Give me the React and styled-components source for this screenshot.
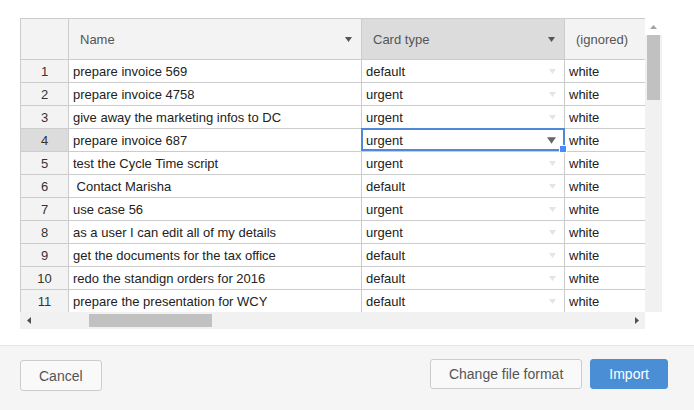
import React from 'react';
import styled, { createGlobalStyle } from 'styled-components';

const GlobalStyle = createGlobalStyle`
  html, body {
    margin: 0;
    padding: 0;
    background: #fff;
    font-family: "Liberation Sans", Arial, sans-serif;
  }
`;

const rows = [
  ['prepare invoice 569', 'default'],
  ['prepare invoice 4758', 'urgent'],
  ['give away the marketing infos to DC', 'urgent'],
  ['prepare invoice 687', 'urgent'],
  ['test the Cycle Time script', 'urgent'],
  [' Contact Marisha', 'default'],
  ['use case 56', 'urgent'],
  ['as a user I can edit all of my details', 'urgent'],
  ['get the documents for the tax office', 'default'],
  ['redo the standign orders for 2016', 'default'],
  ['prepare the presentation for WCY', 'default'],
];

const SELECTED_ROW = 3;

const Page = styled.div`
  width: 694px;
  height: 410px;
  display: flex;
  flex-direction: column;
  overflow: hidden;
`;

const TableArea = styled.div`
  padding: 18px 0 0 20px;
  display: grid;
  grid-template-columns: 625px 17px;
  grid-template-rows: 294px 17px;
`;

const Viewport = styled.div`
  overflow: hidden;
  position: relative;
`;

const Grid = styled.div`
  display: grid;
  grid-template-columns: 48px 293px 203px 120px;
  grid-auto-rows: 23px;
  grid-template-rows: 41px;
  border-top: 1px solid #ccc;
  border-left: 1px solid #ccc;
  width: max-content;
  font-size: 13px;
`;

const HeaderCell = styled.div`
  box-sizing: border-box;
  border-right: 1px solid #ccc;
  border-bottom: 1px solid #ccc;
  background: ${p => (p.active ? '#dcdcdc' : '#f3f3f3')};
  color: #555;
  display: flex;
  align-items: center;
  justify-content: space-between;
  padding: 0 9px 0 11px;
  white-space: nowrap;
`;

const RowHead = styled.div`
  box-sizing: border-box;
  border-right: 1px solid #ccc;
  border-bottom: 1px solid #ccc;
  background: ${p => (p.active ? '#dcdcdc' : '#f3f3f3')};
  color: #333;
  display: flex;
  align-items: center;
  justify-content: center;
`;

const Cell = styled.div`
  box-sizing: border-box;
  border-right: 1px solid #ccc;
  border-bottom: 1px solid #ccc;
  background: #fff;
  color: #222;
  display: flex;
  align-items: center;
  justify-content: space-between;
  padding: 0 8px 0 4px;
  white-space: pre;
  overflow: ${p => (p.selected ? 'visible' : 'hidden')};
  position: relative;
`;

const SelectBox = styled.div`
  position: absolute;
  left: -1px;
  top: -1px;
  right: -1px;
  bottom: 0;
  border: 2px solid #5088d8;
  pointer-events: none;
`;

const Handle = styled.span`
  position: absolute;
  right: -4px;
  bottom: -4px;
  width: 6px;
  height: 6px;
  background: #4b89ff;
  border: 1px solid #fff;
  z-index: 2;
`;

const CellWrap = styled.div`
  display: contents;
`;

const Arrow = ({ color = '#555', w = 7, h = 5 }) => (
  <svg width={w} height={h} viewBox="0 0 7 5">
    <polygon points="0,0 7,0 3.5,5" fill={color} />
  </svg>
);

const VScroll = styled.div`
  display: flex;
  flex-direction: column;
  background: #f1f1f1;
`;

const ScrollButton = styled.div`
  width: 17px;
  height: 17px;
  flex-shrink: 0;
  display: flex;
  align-items: center;
  justify-content: center;
  background: ${p => (p.light ? '#fff' : '#f1f1f1')};
`;

const VThumb = styled.div`
  margin: 0 2px;
  height: 65px;
  background: #c1c1c1;
`;

const HScroll = styled.div`
  display: flex;
  align-items: center;
  background: #f1f1f1;
`;

const HThumb = styled.div`
  margin-left: ${p => p.offset}px;
  width: 123px;
  height: 13px;
  background: #c1c1c1;
`;

const Spacer = styled.div`
  flex: 1;
`;

const Corner = styled.div`
  background: #fff;
`;

const Footer = styled.div`
  margin-top: 16px;
  flex: 1;
  border-top: 1px solid #e5e5e5;
  background: #f5f5f5;
  display: flex;
  align-items: flex-start;
  padding: 13px 26px 0 20px;
  gap: 8px;
`;

const Button = styled.button`
  font-family: "Liberation Sans", Arial, sans-serif;
  font-size: 14px;
  height: ${p => (p.tall ? 31 : 30)}px;
  margin-top: ${p => (p.tall ? 1 : 0)}px;
  padding: 0 18px;
  border-radius: 3px;
  border: 1px solid ${p => (p.primary ? '#4a8ed6' : '#ccc')};
  background: ${p => (p.primary ? '#4a8ed6' : '#f9f9f9')};
  color: ${p => (p.primary ? '#fff' : '#555')};
  cursor: pointer;
  margin-left: ${p => (p.push ? 'auto' : '0')};
`;

const App = () => (
  <Page>
    <GlobalStyle />
    <TableArea>
      <Viewport>
        <Grid>
          <HeaderCell />
          <HeaderCell>
            <span>Name</span>
            <Arrow />
          </HeaderCell>
          <HeaderCell active>
            <span>Card type</span>
            <Arrow />
          </HeaderCell>
          <HeaderCell>
            <span>(ignored)</span>
          </HeaderCell>
          {rows.map(([name, type], i) => {
            const selected = i === SELECTED_ROW;
            return (
              <CellWrap key={i}>
                <RowHead active={selected}>{i + 1}</RowHead>
                <Cell>{name}</Cell>
                <Cell selected={selected}>
                  <span>{type}</span>
                  {selected ? <Arrow color="#666" w={9} h={7} /> : <Arrow color="#e4e4e4" />}
                  {selected && (
                    <SelectBox>
                      <Handle />
                    </SelectBox>
                  )}
                </Cell>
                <Cell>white</Cell>
              </CellWrap>
            );
          })}
        </Grid>
      </Viewport>
      <VScroll>
        <ScrollButton light>
          <svg width="7" height="4" viewBox="0 0 7 4">
            <polygon points="0,4 7,4 3.5,0" fill="#a3a3a3" />
          </svg>
        </ScrollButton>
        <VThumb />
        <Spacer />
      </VScroll>
      <HScroll>
        <ScrollButton>
          <svg width="4" height="7" viewBox="0 0 4 7">
            <polygon points="4,0 4,7 0,3.5" fill="#505050" />
          </svg>
        </ScrollButton>
        <HThumb offset={52} />
        <Spacer />
        <ScrollButton>
          <svg width="4" height="7" viewBox="0 0 4 7">
            <polygon points="0,0 0,7 4,3.5" fill="#505050" />
          </svg>
        </ScrollButton>
      </HScroll>
      <Corner />
    </TableArea>
    <Footer>
      <Button tall>Cancel</Button>
      <Button push>Change file format</Button>
      <Button primary>Import</Button>
    </Footer>
  </Page>
);

export default App;
